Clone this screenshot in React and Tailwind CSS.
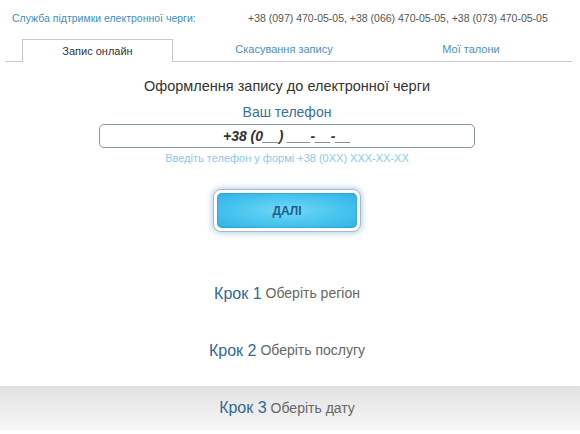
import React from 'react';

const font = { fontFamily: '"Liberation Sans", Arial, sans-serif' };

const Step = ({ n, label, shaded }) => (
  <div
    className={`flex items-center justify-center pr-[6px] ${
      shaded ? 'mt-[7px] h-[44px] bg-gradient-to-b from-[#e1e1e1] via-[#ececec] to-[#f6f6f6]' : 'h-[57px]'
    }`}
  >
    <span className="text-[16px] text-[#2f6a9a]">Крок {n}</span>
    <span className="ml-[4px] text-[14px] text-[#666]">{label}</span>
  </div>
);

export default function App() {
  return (
    <div className="w-[580px] h-[434px] bg-white overflow-hidden" style={font}>
      {/* підтримка */}
      <div className="flex items-center h-[36px] pt-[1px] text-[10.5px]">
        <span className="ml-[12px] w-[236px] text-[#3d8fc4]">Служба підтримки електронної черги:</span>
        <span className="text-[#555]">+38 (097) 470-05-05, +38 (066) 470-05-05, +38 (073) 470-05-05</span>
      </div>

      {/* вкладки */}
      <div className="flex items-end h-[26px] ml-[5px] mr-[8px] border-b border-[#c8c8c8] text-[11px]">
        <div className="w-[17px]" />
        <div className="w-[151px] h-[23px] -mb-px flex items-center justify-center border border-b-0 border-[#c8c8c8] bg-white text-[#333]">
          Запис онлайн
        </div>
        <div className="w-[222px] h-[23px] flex items-center justify-center text-[#4a90c4]">
          Скасування запису
        </div>
        <div className="w-[152px] h-[23px] flex items-center justify-center text-[#4a90c4]">
          Мої талони
        </div>
      </div>

      {/* форма */}
      <div className="flex flex-col items-center pr-[6px]">
        <div className="mt-[15px] text-[14.5px] leading-[18px] text-[#333]">Оформлення запису до електронної черги</div>
        <div className="mt-[9px] text-[14px] leading-[17px] text-[#35729f]">Ваш телефон</div>
        <div className="mt-[3px] w-[376px] h-[24px] flex items-center justify-center border border-[#8796a3] rounded-[5px] text-[14px] font-bold italic text-[#333]">
          +38 (0__) ___-__-__
        </div>
        <div className="mt-[4px] text-[11px] leading-[13px] text-[#8cc9e8]">Введіть телефон у формі +38 (0XX) XXX-XX-XX</div>

        <div className="mt-[24px] p-[3px] rounded-[8px] bg-white border border-[#a9b7c6] shadow-[0_0_5px_2px_rgba(120,170,220,0.45)]">
          <div className="w-[140px] h-[35px] flex items-center justify-center rounded-[5px] bg-[radial-gradient(ellipse_at_center,#74d8f6_0%,#48c4ef_55%,#30b2e4_100%)] shadow-[inset_0_0_2px_rgba(0,90,150,0.5)] text-[12px] font-bold text-[#1b5d8e]">
            ДАЛІ
          </div>
        </div>
      </div>

      {/* кроки */}
      <div className="mt-[33px]">
        <Step n={1} label="Оберіть регіон" />
        <Step n={2} label="Оберіть послугу" />
        <Step n={3} label="Оберіть дату" shaded />
      </div>
    </div>
  );
}
